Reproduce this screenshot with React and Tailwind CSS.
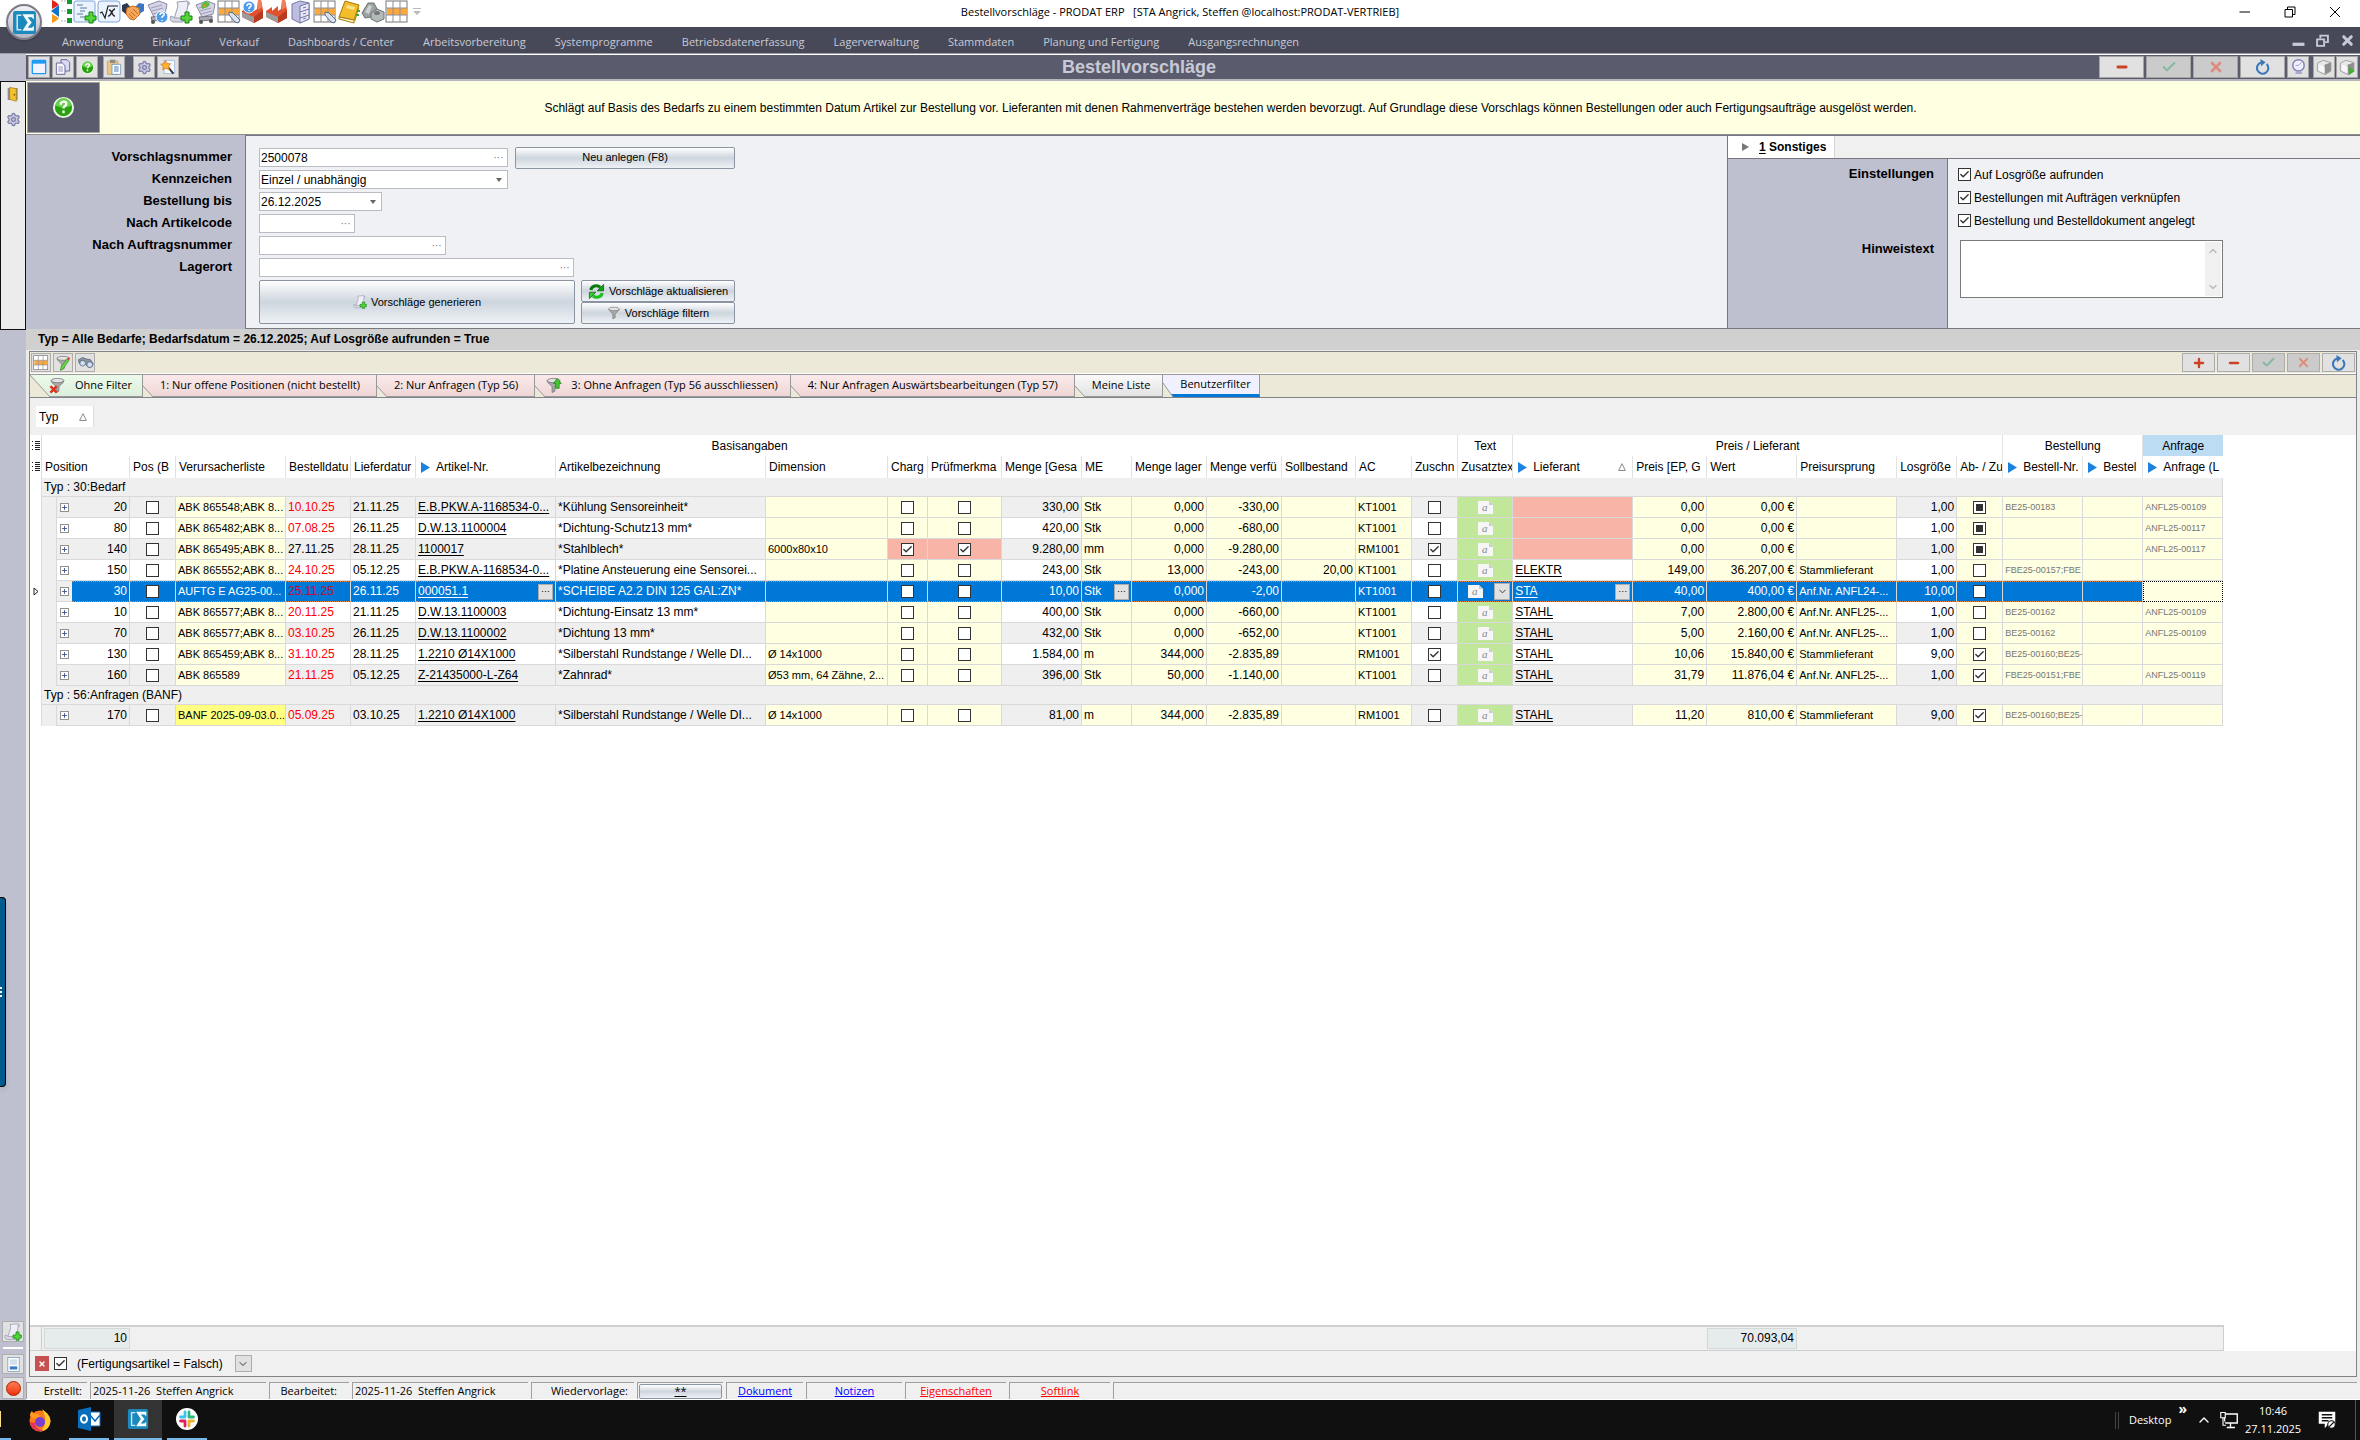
import React, { useState } from 'react';
import { Check, Minus, Plus, X, ChevronDown, ChevronUp, Settings } from 'lucide-react';

const menuItems = [
  'Anwendung', 'Einkauf', 'Verkauf', 'Dashboards / Center', 'Arbeitsvorbereitung', 'Systemprogramme',
  'Betriebsdatenerfassung', 'Lagerverwaltung', 'Stammdaten', 'Planung und Fertigung', 'Ausgangsrechnungen',
];

const Y = 'bg-[#ffffe1]';
const RED = 'bg-[#f7b4a7]';

// one entry per grid column, w is the <col> class
const columns = [
  { key: 'pos', label: 'Position', w: 'w-[58px]', num: true },
  { key: 'bv', label: 'Pos (B', w: 'w-[46px]', check: true },
  { key: 'list', label: 'Verursacherliste', w: 'w-[110px]', bg: Y, size: 'text-[11px]' },
  { key: 'order', label: 'Bestelldatu', w: 'w-[65px]' },
  { key: 'delivery', label: 'Lieferdatur', w: 'w-[65px]' },
  { key: 'article', label: 'Artikel-Nr.', w: 'w-[140px]', link: true, arrow: true },
  { key: 'name', label: 'Artikelbezeichnung', w: 'w-[210px]' },
  { key: 'dim', label: 'Dimension', w: 'w-[122px]', bg: Y, size: 'text-[11px]' },
  { key: 'charge', label: 'Charg', w: 'w-[40px]', bg: Y, check: true },
  { key: 'pruef', label: 'Prüfmerkma', w: 'w-[74px]', bg: Y, check: true },
  { key: 'qty', label: 'Menge [Gesa', w: 'w-[80px]', num: true },
  { key: 'unit', label: 'ME', w: 'w-[50px]', bg: Y },
  { key: 'stock', label: 'Menge lager', w: 'w-[75px]', bg: Y, num: true },
  { key: 'avail', label: 'Menge verfü', w: 'w-[75px]', bg: Y, num: true },
  { key: 'target', label: 'Sollbestand', w: 'w-[74px]', bg: Y, num: true },
  { key: 'ac', label: 'AC', w: 'w-[56px]', bg: Y, size: 'text-[11px]' },
  { key: 'cut', label: 'Zuschn', w: 'w-[46px]', check: true },
  { key: 'text', label: 'Zusatztex', w: 'w-[55px]', bg: 'bg-[#c1e79a]' },
  { key: 'supplier', label: 'Lieferant', w: 'w-[120px]', link: true, arrow: true, sort: true },
  { key: 'price', label: 'Preis [EP, G', w: 'w-[74px]', bg: Y, num: true },
  { key: 'value', label: 'Wert', w: 'w-[90px]', bg: Y, num: true },
  { key: 'source', label: 'Preisursprung', w: 'w-[100px]', bg: Y, size: 'text-[11px]' },
  { key: 'lot', label: 'Losgröße', w: 'w-[60px]', num: true },
  { key: 'ab', label: 'Ab- / Zu', w: 'w-[46px]', bg: Y, check: true },
  { key: 'orderNo', label: 'Bestell-Nr.', w: 'w-[80px]', bg: Y, size: 'text-[9px]', arrow: true, muted: true },
  { key: 'orderNo2', label: 'Bestel', w: 'w-[60px]', bg: Y, arrow: true },
  { key: 'request', label: 'Anfrage (L', w: 'w-[80px]', bg: Y, size: 'text-[9px]', arrow: true, muted: true },
];

const groups = [
  {
    title: 'Typ : 30:Bedarf',
    rows: [
      { pos: '20', list: 'ABK 865548;ABK 8...', order: '10.10.25', late: true, delivery: '21.11.25', article: 'E.B.PKW.A-1168534-0...', name: '*Kühlung Sensoreinheit*', qty: '330,00', unit: 'Stk', stock: '0,000', avail: '-330,00', ac: 'KT1001', price: '0,00', value: '0,00 €', lot: '1,00', ab: 'mixed', orderNo: 'BE25-00183', request: 'ANFL25-00109' },
      { pos: '80', list: 'ABK 865482;ABK 8...', order: '07.08.25', late: true, delivery: '26.11.25', article: 'D.W.13.1100004', name: '*Dichtung-Schutz13 mm*', qty: '420,00', unit: 'Stk', stock: '0,000', avail: '-680,00', ac: 'KT1001', price: '0,00', value: '0,00 €', lot: '1,00', ab: 'mixed', request: 'ANFL25-00117' },
      { pos: '140', list: 'ABK 865495;ABK 8...', order: '27.11.25', delivery: '28.11.25', article: '1100017', name: '*Stahlblech*', dim: '6000x80x10', charge: true, pruef: true, qty: '9.280,00', unit: 'mm', stock: '0,000', avail: '-9.280,00', ac: 'RM1001', cut: true, price: '0,00', value: '0,00 €', lot: '1,00', ab: 'mixed', request: 'ANFL25-00117' },
      { pos: '150', list: 'ABK 865552;ABK 8...', order: '24.10.25', late: true, delivery: '05.12.25', article: 'E.B.PKW.A-1168534-0...', name: '*Platine Ansteuerung eine Sensorei...', qty: '243,00', unit: 'Stk', stock: '13,000', avail: '-243,00', target: '20,00', ac: 'KT1001', supplier: 'ELEKTR', price: '149,00', value: '36.207,00 €', source: 'Stammlieferant', lot: '1,00', orderNo: 'FBE25-00157;FBE' },
      { pos: '30', selected: true, list: 'AUFTG E AG25-00...', order: '25.11.25', late: true, delivery: '26.11.25', article: '000051.1', name: '*SCHEIBE A2.2 DIN 125 GAL:ZN*', qty: '10,00', unit: 'Stk', stock: '0,000', avail: '-2,00', ac: 'KT1001', supplier: 'STA', price: '40,00', value: '400,00 €', source: 'Anf.Nr. ANFL24-...', lot: '10,00' },
      { pos: '10', list: 'ABK 865577;ABK 8...', order: '20.11.25', late: true, delivery: '21.11.25', article: 'D.W.13.1100003', name: '*Dichtung-Einsatz 13 mm*', qty: '400,00', unit: 'Stk', stock: '0,000', avail: '-660,00', ac: 'KT1001', supplier: 'STAHL', price: '7,00', value: '2.800,00 €', source: 'Anf.Nr. ANFL25-...', lot: '1,00', orderNo: 'BE25-00162', request: 'ANFL25-00109' },
      { pos: '70', list: 'ABK 865577;ABK 8...', order: '03.10.25', late: true, delivery: '26.11.25', article: 'D.W.13.1100002', name: '*Dichtung 13 mm*', qty: '432,00', unit: 'Stk', stock: '0,000', avail: '-652,00', ac: 'KT1001', supplier: 'STAHL', price: '5,00', value: '2.160,00 €', source: 'Anf.Nr. ANFL25-...', lot: '1,00', orderNo: 'BE25-00162', request: 'ANFL25-00109' },
      { pos: '130', list: 'ABK 865459;ABK 8...', order: '31.10.25', late: true, delivery: '28.11.25', article: '1.2210 Ø14X1000', name: '*Silberstahl Rundstange / Welle DI...', dim: 'Ø 14x1000', qty: '1.584,00', unit: 'm', stock: '344,000', avail: '-2.835,89', ac: 'RM1001', cut: true, supplier: 'STAHL', price: '10,06', value: '15.840,00 €', source: 'Stammlieferant', lot: '9,00', ab: true, orderNo: 'BE25-00160;BE25-' },
      { pos: '160', list: 'ABK 865589', order: '21.11.25', late: true, delivery: '05.12.25', article: 'Z-21435000-L-Z64', name: '*Zahnrad*', dim: 'Ø53 mm, 64 Zähne, 2...', qty: '396,00', unit: 'Stk', stock: '50,000', avail: '-1.140,00', ac: 'KT1001', supplier: 'STAHL', price: '31,79', value: '11.876,04 €', source: 'Anf.Nr. ANFL25-...', lot: '1,00', ab: true, orderNo: 'FBE25-00151;FBE', request: 'ANFL25-00119' },
    ],
  },
  {
    title: 'Typ : 56:Anfragen (BANF)',
    rows: [
      { pos: '170', list: 'BANF 2025-09-03.0...', strong: true, order: '05.09.25', late: true, delivery: '03.10.25', article: '1.2210 Ø14X1000', name: '*Silberstahl Rundstange / Welle DI...', dim: 'Ø 14x1000', qty: '81,00', unit: 'm', stock: '344,000', avail: '-2.835,89', ac: 'RM1001', supplier: 'STAHL', price: '11,20', value: '810,00 €', source: 'Stammlieferant', lot: '9,00', ab: true, orderNo: 'BE25-00160;BE25-' },
    ],
  },
];

/* ---------- icons ---------- */

const Svg = ({ size = 24, children }) => (
  <svg width={size} height={size} viewBox="0 0 24 24" className="block shrink-0" aria-hidden="true">{children}</svg>
);

const PlusBadge = () => (
  <path d="M16 12h4v4h3v4h-3v3h-4v-3h-4v-4h4z" fill="#52d63a" stroke="#14800f" />
);

const OrgIcon = () => (
  <Svg>
    <path d="M3 0a13 13 0 0 1 7 5L3 9z" fill="#e2231a" />
    <path d="M10 5v12l-8-6z" fill="#1173c8" />
    <path d="M3 14l7 4a13 13 0 0 1-7 5z" fill="#f59a1b" />
    <path d="M12 1h5M12 11h5M12 21h5" stroke="#b9b9b9" strokeDasharray="2 1" />
    <path d="M18 0h5v4h-5zM18 9h5v5h-5zM18 18h5v5h-5z" fill="#0f9b2e" />
  </Svg>
);

const DocPlusIcon = () => (
  <Svg>
    <rect x="1" y="1" width="21" height="21" rx="2" fill="#eaf3ff" stroke="#7fa5d8" />
    <path d="M4 5h6M7 8h7M7 11h5M4 14h6M7 17h4" stroke="#5d7f93" />
    <PlusBadge />
  </Svg>
);

const RootIcon = () => (
  <Svg>
    <rect x="1" y="1" width="22" height="21" rx="3" fill="#eaf3ff" stroke="#7fa5d8" />
    <path d="M3 13l2-1 3 6L11 6h10" fill="none" stroke="#222" strokeWidth="1.2" />
    <path d="M12 10c3-1 3 7 6 6M18 9c-3 0-4 8-7 7" fill="none" stroke="#222" strokeWidth="1.4" />
  </Svg>
);

const HandshakeIcon = () => (
  <Svg>
    <path d="M1 5l5-2 4 5-4 7-5-4z" fill="#2c3a4c" />
    <path d="M23 4l-5-1-4 4 4 7 5-3z" fill="#3b77c4" />
    <path d="M6 8l6-2 6 2 1 6-6 6-4-1-4-5z" fill="#f6a65b" stroke="#c76b20" />
    <path d="M8 14l4 4M10 12l4 4M12 9l5 5" stroke="#c76b20" />
  </Svg>
);

const CartIcon = ({ help }) => (
  <Svg>
    <path d="M3 5l11-4 8 3-2 10-11 3z" fill="#d5d5e6" stroke="#8a8aa8" />
    <path d="M6 8l11-3M7 11l11-3M8 14l11-3" stroke="#9c9cba" />
    {!help && <path d="M8 5l4-4 5 2-2 4-6 2z" fill="#58c040" />}
    {!help && <path d="M9 6l3-2 2 3z" fill="#f08a28" />}
    <path d="M6 17l13-1v4l-12 1z" fill="#a6a6b8" stroke="#777" />
    <circle cx="8" cy="22" r="2" fill="#555" /><circle cx="18" cy="21" r="2" fill="#555" />
    {help && <circle cx="17" cy="17" r="6" fill="#4d9be8" stroke="#fff" />}
    {help && <path d="M15 15c0-3 5-3 4 0l-2 2v1M17 20v1" fill="none" stroke="#fff" strokeWidth="1.5" />}
  </Svg>
);

const ScrollIcon = ({ size }) => (
  <Svg size={size}>
    <path d="M8 2l10-1c3 0 3 4 1 4l-3 14H5L9 6z" fill="#eeeef6" stroke="#9a9ab0" />
    <path d="M2 16c-2 3 0 6 3 6h9l1-4H6z" fill="#d7d7e4" stroke="#9a9ab0" />
    <path d="M18 1c3 0 4 5 0 5z" fill="#b4b4cc" />
    <PlusBadge />
  </Svg>
);

const GridIcon = ({ pen, size }) => (
  <Svg size={size}>
    <rect x="1" y="1" width="21" height="21" fill="#fff" stroke="#777" />
    <path d="M2 8h20v7H2z" fill="#fba93a" />
    <path d="M8 1v21M15 1v21M1 8h21M1 15h21" stroke="#8e8e9a" />
    {pen && <path d="M12 12l4 1 7 7-2 3-3-1-6-7z" fill="#d9e3f2" stroke="#5a6b8a" />}
  </Svg>
);

const FactoryIcon = ({ help }) => (
  <Svg>
    <path d="M17 0h3l2 10v8l-9 5-12-6V11l6-4v4l6-5v5l3-2z" fill="#e0522f" />
    <path d="M1 12l12 5v6L1 17z" fill="#9b9b9b" />
    <path d="M17 0h3l1 7-4 3z" fill="#f27e5c" />
    <path d="M13 17l9-7v8l-9 5z" fill="#b93a1e" />
    {help && <circle cx="8" cy="7" r="6" fill="#4d9be8" stroke="#e9f3ff" />}
    {help && <path d="M6 6c0-3 5-3 4 0L8 8v1M8 10v1" fill="none" stroke="#fff" strokeWidth="1.5" />}
  </Svg>
);

const CabinetIcon = () => (
  <Svg>
    <path d="M3 4l8-3 9 2v16l-9 4-8-4z" fill="#bdbde0" stroke="#7777a8" />
    <path d="M11 6l9-3v16l-9 4z" fill="#e8e8f8" stroke="#7777a8" />
    <path d="M11 12l9-3M11 18l9-3M14 8l3-1M14 14l3-1M14 19l3-1" stroke="#7777a8" />
  </Svg>
);

const BookIcon = () => (
  <Svg>
    <path d="M8 1l14 4-5 15L2 17z" fill="#f2bd2a" stroke="#a87a08" />
    <path d="M2 17l15 3v3L2 19z" fill="#fff6cf" stroke="#a87a08" />
    <path d="M22 5v4l-4 13-1-2z" fill="#c68e10" />
    <path d="M10 5l8 2-1 3-8-2z" fill="#fbe28e" />
    <path d="M20 11h3M19 15h3" stroke="#4aa43a" strokeWidth="2" />
  </Svg>
);

const PartsIcon = () => (
  <Svg>
    <path d="M1 13L7 3l6 0 3 6-6 8-6 1z" fill="#9da3a3" stroke="#6d7373" />
    <path d="M4 12l4-7 3 1-3 8z" fill="#cdd2d2" />
    <path d="M10 13l6-4 7 3v7l-7 3-6-3z" fill="#b4baba" stroke="#6d7373" />
    <ellipse cx="16" cy="13" rx="3" ry="2" fill="#737979" />
  </Svg>
);

const HelpIcon = ({ size }) => (
  <Svg size={size}>
    <circle cx="12" cy="12" r="10" fill="#28a00c" stroke="#e9f5e6" strokeWidth="2" />
    <path d="M4 10a8 8 0 0 1 16 0c-5 3-11 3-16 0z" fill="#69cf4c" />
    <path d="M9 9c0-4 6-4 6-1 0 3-3 2-3 5M12 15v3" fill="none" stroke="#fff" strokeWidth="2.4" />
  </Svg>
);

const WindowIcon = () => (
  <Svg size={16}>
    <rect x="2" y="2" width="20" height="20" rx="1" fill="#f3f3ff" stroke="#1e9bf5" strokeWidth="2" />
    <path d="M2 2h20v5H2z" fill="#1e9bf5" />
  </Svg>
);

const CopyIcon = () => (
  <Svg size={16}>
    <path d="M9 1h9l4 4v13H9z" fill="#dadaf2" stroke="#6a6a9c" strokeWidth="1.5" />
    <path d="M2 6h9l4 4v13H2z" fill="#f6f6ff" stroke="#6a6a9c" strokeWidth="1.5" />
    <path d="M5 12h7M5 15h7M5 18h7" stroke="#6a6a9c" />
  </Svg>
);

const PasteIcon = () => (
  <Svg size={16}>
    <path d="M2 3h16v20H2z" fill="#e9c684" stroke="#c29a50" />
    <path d="M6 1h8v5H6z" fill="#8c8c8c" />
    <path d="M9 8h13v15H9z" fill="#fff" stroke="#4b7fb5" />
    <path d="M12 12h7M12 15h7M12 18h7" stroke="#4b7fb5" strokeWidth="1.5" />
  </Svg>
);

const GearIcon = () => <Settings size={15} color="#7d7da6" fill="#c9c9e4" strokeWidth={2} />;

const WandIcon = () => (
  <Svg size={16}>
    <path d="M6 2h16v20H6z" fill="#f4f8ff" stroke="#8aa7d0" />
    <path d="M12 12l8 10" stroke="#333" strokeWidth="3" />
    <path d="M8 2l3 5 5 0-3 4 1 5-5-2-5 2 1-5-4-3 5-1z" fill="#fbb52c" stroke="#d2661a" />
  </Svg>
);

const FunnelIcon = ({ kind, size = 18 }) => (
  <Svg size={size}>
    <path d="M3 5c0 4 6 6 7 9v8l4-2v-6c1-3 7-5 7-9z" fill="#a8a8a8" stroke="#6f6f6f" />
    <ellipse cx="12" cy="5" rx="9" ry="3" fill="#e2e2e2" stroke="#6f6f6f" />
    {kind === 'off' && <path d="M2 13l9 9M11 13l-9 9" stroke="#e0301e" strokeWidth="3.5" />}
    {kind === 'up' && <path d="M17 2l6 7h-3v7h-5V9h-3z" fill="#46c62e" stroke="#14800f" />}
    {kind === 'edit' && <path d="M21 8l-9 13-4 2 1-5 9-12z" fill="#6fd44c" stroke="#2e8b1a" />}
    {kind === 'edit' && <path d="M18 6l2-3 3 2-2 3z" fill="#e5423a" />}
  </Svg>
);

const BinocularsIcon = () => (
  <Svg size={17}>
    <path d="M2 8l6-3 5 2 6 1 4 6-2 4-5 1-4-5-5 1-4-2z" fill="#8a93a3" stroke="#515b6c" />
    <circle cx="8" cy="13" r="4" fill="#cfe0f7" stroke="#515b6c" />
    <circle cx="18" cy="15" r="4" fill="#cfe0f7" stroke="#515b6c" />
  </Svg>
);

const PrinterIcon = ({ go }) => (
  <Svg size={17}>
    <path d="M2 6l8-4 11 3v12l-8 5-11-5z" fill="#e9e9e9" stroke="#8a8a8a" />
    <path d="M12 8l9-3v12l-9 5z" fill="#8e8e8e" />
    <path d="M4 8l8 3v9l-8-4z" fill="#f7f7f7" />
    {go && <path d="M14 11l8 6-8 6z" fill="#3cb524" />}
  </Svg>
);

const PreviewIcon = () => (
  <Svg size={17}>
    <circle cx="12" cy="9" r="8" fill="#eeeeff" stroke="#8080b8" strokeWidth="2" />
    <path d="M12 9l4-4M8 9h4" stroke="#8080b8" />
    <path d="M9 18h8v3H7z" fill="#a9a9d4" />
  </Svg>
);

const DoorIcon = () => (
  <Svg size={16}>
    <path d="M4 3h15v18H4z" fill="#8d8d8d" />
    <path d="M7 2l10 2v19l-10-3z" fill="#f5c030" stroke="#a57a0a" />
    <circle cx="14" cy="13" r="1.3" fill="#7c5a00" />
  </Svg>
);

const RefreshGreen = () => (
  <Svg size={17}>
    <path d="M4 10c1-6 9-8 13-4" fill="none" stroke="#0b7a0b" strokeWidth="4.500" />
    <path d="M22 2v9h-9z" fill="#14a514" stroke="#0a4f0a" />
    <path d="M20 14c-1 6-9 8-13 4" fill="none" stroke="#1fbf1f" strokeWidth="4.500" />
    <path d="M2 22v-9h9z" fill="#35cf35" stroke="#0a4f0a" />
  </Svg>
);

const ReloadIcon = () => (
  <Svg size={16}>
    <path d="M17.500 7.500a8.500 8.500 0 1 1-8-2.200" fill="none" stroke="#3c78b8" strokeWidth="3.200" />
    <path d="M8 0l8 5-7 6z" fill="#3c78b8" />
  </Svg>
);

const NetworkIcon = () => (
  <Svg size={18}>
    <path d="M6 4h17v12H6zM14 16v5M9 22h11" fill="none" stroke="#fff" strokeWidth="1.800" />
    <path d="M1 2h6v7H1zM4 9v10h4" fill="#101010" stroke="#fff" strokeWidth="1.500" />
  </Svg>
);

const ProdatMark = ({ size = 24 }) => (
  <Svg size={size}>
    <rect x="1" y="1" width="22" height="22" rx="2" fill="#1c89bd" />
    <path d="M9 5H5v14h4" fill="none" stroke="#cfe6f2" strokeWidth="1.500" />
    <path d="M10 4h11v5l-2-2h-4l4 5-4 5h4l2-2v5H10l5-8z" fill="#f4fafd" />
  </Svg>
);

const BlueArrow = () => (
  <svg width="9" height="11" viewBox="0 0 9 11" className="mr-[6px] ml-[2px] shrink-0" aria-hidden="true">
    <path d="M0 0l9 5.500-9 5.500z" fill="#1b82e0" />
  </svg>
);

const SortTriangle = () => (
  <svg width="8" height="8" viewBox="0 0 8 8" className="shrink-0" aria-hidden="true">
    <path d="M4 .7L7.400 7.500H.6z" fill="none" stroke="#8c8c8c" />
  </svg>
);

const Gutter = () => (
  <svg width="8" height="10" viewBox="0 0 8 10" className="mx-auto block" aria-hidden="true">
    <path d="M3 .5h5M3 2.500h5M3 4.500h5M3 6.500h5M3 8.500h5" stroke="#222" />
    <path d="M0 .5h1M0 4.500h1M0 8.500h1" stroke="#222" />
  </svg>
);

/* ---------- controls ---------- */

const CheckBox = ({ state, label, id }) => {
  const [on, setOn] = useState(state === true);
  return (
    <span className="relative inline-block h-[13px] w-[13px] shrink-0 align-middle">
      <input
        id={id}
        type="checkbox"
        aria-label={label}
        checked={on}
        onChange={() => setOn(!on)}
        className="absolute inset-0 m-0 h-[13px] w-[13px] appearance-none border border-[#333] bg-white"
      />
      {on && <Check size={11} strokeWidth={3} color="#333" className="pointer-events-none absolute top-px left-px" />}
      {state === 'mixed' && !on && <span className="pointer-events-none absolute top-[3px] left-[3px] h-[7px] w-[7px] bg-[#333]" />}
    </span>
  );
};

const ToolButton = ({ label, wide, disabled, children }) => (
  <button
    type="button"
    aria-label={label}
    disabled={disabled}
    className={`flex h-[22px] items-center justify-center border border-[#a5a5a5] ${wide ? 'w-[45px]' : 'w-[22px]'} ${disabled ? 'bg-[#cbcbcb]' : 'bg-[#e1e1e1]'}`}
  >
    {children}
  </button>
);

const GridButton = ({ label, disabled, wide, children }) => (
  <button
    type="button"
    aria-label={label}
    disabled={disabled}
    className={`flex h-[19px] items-center justify-center border border-[#adadad] ${wide ? 'w-[33px]' : 'w-[20px]'} ${disabled ? 'bg-[#cbcbcb]' : 'bg-[#e1e1e1]'}`}
  >
    {children}
  </button>
);

const PushButton = ({ className, children }) => (
  <button
    type="button"
    className={`flex items-center justify-center gap-1 rounded-[2px] border border-[#8b95a1] bg-linear-to-b from-white via-[#cdd5dd] to-[#eef2f6] text-[11px] ${className}`}
  >
    {children}
  </button>
);

const Field = ({ id, value = '', width, arrow }) => (
  <div className={`flex h-[19px] items-center border border-[#b9bcc2] bg-white ${width}`}>
    <input id={id} defaultValue={value} className="h-full min-w-0 flex-1 px-px text-[12px] outline-none" />
    <button type="button" aria-label="Auswahl" className="flex h-full w-[17px] shrink-0 items-center justify-center text-[10px] leading-none text-gray-500">
      {arrow ? <svg width="6" height="4" viewBox="0 0 6 4"><path d="M0 0h6L3 4z" fill="#666" /></svg> : '···'}
    </button>
  </div>
);

const FormLabel = ({ htmlFor, children }) => (
  <label htmlFor={htmlFor} className="block h-[19px] text-[13px] leading-[19px] font-bold">{children}</label>
);

const Tab = ({ first, active, tone, icon, pad = 'pr-[16px]', children }) => (
  <button
    type="button"
    role="tab"
    aria-selected={!!active}
    className={`relative flex h-[22px] items-center border-r border-[#999] font-["Open_Sans",sans-serif] text-[11px] ${first ? 'pl-[45px]' : icon ? 'pl-[36px]' : 'pl-[17px]'} ${active ? 'border-b-[3px] border-b-[#0078d7]' : 'border-b'} ${pad} ${tone}`}
  >
    <svg width="20" height="22" viewBox="0 0 20 22" className="absolute top-0 left-0" aria-hidden="true">
      <path d={first ? 'M0 0L20 22H0z' : active ? 'M0 8L10 22H0z' : 'M0 11L10 22H0z'} fill="#ece9d8" />
      <path d={first ? 'M0 0L20 22' : active ? 'M0 8L10 22' : 'M0 11L10 22'} stroke="#999" fill="none" />
    </svg>
    {icon && <span className={`absolute top-[2px] ${first ? 'left-[19px]' : 'left-[10px]'}`}><FunnelIcon kind={icon} size={17} /></span>}
    {children}
  </button>
);

const pink = 'bg-linear-to-b from-[#fbeaea] to-[#efd6d6]';

const Cell = ({ col, row, zebra }) => {
  const value = row[col.key];
  const sel = row.selected;
  let bg = col.bg || zebra;
  if (col.key === 'supplier' && !value) bg = RED;
  if ((col.key === 'charge' || col.key === 'pruef') && value) bg = RED;
  if (col.key === 'list' && row.strong) bg = 'bg-[#ffff80]';
  if (sel) bg = col.key === 'request' ? 'bg-[#ffffe1]' : 'bg-[#0078d7]';

  let color = sel ? 'text-white' : 'text-black';
  if (col.muted) color = 'text-[#777]';
  if (col.key === 'order' && row.late) color = sel ? 'text-[#c01030]' : 'text-[#ff0000]';

  let content = value;
  if (col.check) content = <CheckBox state={value} label={`${col.label} ${row.pos}`} />;
  if (col.key === 'text') {
    content = (
      <span className={`flex h-[19px] items-center ${sel ? 'justify-between pl-[8px]' : 'justify-center'}`}>
        <svg width="15" height="13" viewBox="0 0 15 13" aria-hidden="true">
          <path d="M0 0h11l4 4v9H0z" fill="#f6f6f6" />
          <path d="M11 0v4h4z" fill="#ccc" />
          <text x="4" y="10" fontSize="11" fontStyle="italic" fontFamily="Liberation Serif" fill="#888">a</text>
        </svg>
        {sel && (
          <button type="button" aria-label="Zusatztext öffnen" className="flex h-[17px] w-[16px] items-center justify-center border border-[#adadad] bg-[#e1e1e1]">
            <ChevronDown size={11} color="#333" />
          </button>
        )}
      </span>
    );
  }
  if (col.link && value) content = <a href="#" className="underline underline-offset-2">{value}</a>;
  if (sel && ['article', 'unit', 'supplier'].includes(col.key)) {
    content = (
      <span className="flex items-center justify-between">
        {content}
        <button type="button" aria-label="Auswahl" className="flex h-[16px] w-[15px] items-center justify-center border border-[#adadad] bg-[#e1e1e1] text-[9px] leading-none text-black">···</button>
      </span>
    );
  }
  const edge = sel
    ? col.key === 'request' ? 'border border-dotted border-black' : 'border-r border-r-[#d9d9d9] border-y border-y-[#e8833a] [border-top-style:dotted] [border-bottom-style:dotted]'
    : 'border-r border-b border-[#d9d9d9]';
  const pad = col.check ? 'text-center' : col.num ? 'pr-[2px] text-right' : col.size ? 'pl-[2px]' : 'px-[2px]';
  return (
    <td className={`h-[21px] overflow-hidden p-0 leading-[19px] whitespace-nowrap ${edge} ${bg} ${color} ${col.size || ''} ${pad}`}>
      {content}
    </td>
  );
};

const Cols = () => (
  <colgroup>
    <col className="w-[12px]" />
    <col className="w-[15px]" />
    <col className="w-[15px]" />
    {columns.map((c) => <col key={c.key} className={c.w} />)}
  </colgroup>
);

const DataGrid = () => (
  <table className="w-[2193px] table-fixed border-separate border-spacing-0 text-[12px]">
    <Cols />
    <thead>
      <tr className="h-[21px]">
        <th className="border-r border-[#ddd] p-0"><Gutter /></th>
        <th colSpan={19} className="border-r border-[#e2e2e2] p-0 font-normal">Basisangaben</th>
        <th className="border-r border-[#e2e2e2] p-0 font-normal">Text</th>
        <th colSpan={6} className="border-r border-[#e2e2e2] p-0 font-normal">Preis / Lieferant</th>
        <th colSpan={2} className="border-r border-[#e2e2e2] p-0 font-normal">Bestellung</th>
        <th className="bg-[#bcdcf4] p-0 font-normal">Anfrage</th>
      </tr>
      <tr className="h-[22px]">
        <th className="border-r border-[#ddd] p-0"><Gutter /></th>
        {columns.map((c, i) => (
          <th
            key={c.key}
            colSpan={i === 0 ? 3 : 1}
            className={`overflow-hidden py-0 pr-0 pl-[3px] text-left font-normal whitespace-nowrap ${c.key === 'request' ? '' : 'border-r border-[#e2e2e2]'}`}
          >
            <span className="flex items-center">
              {c.arrow && <BlueArrow />}
              <span className={c.sort ? 'flex-1' : ''}>{c.label}</span>
              {c.sort && <span className="mr-[6px]"><SortTriangle /></span>}
            </span>
          </th>
        ))}
      </tr>
    </thead>
    {groups.map((g) => (
      <tbody key={g.title}>
        <tr className="h-[19px]">
          <td className="border-r border-[#ddd] p-0" />
          <td colSpan={29} className="border-r border-b border-[#d9d9d9] bg-[#efefef] p-0 pl-[2px] leading-[18px]">{g.title}</td>
        </tr>
        {g.rows.map((row, i) => {
          const zebra = i % 2 === 0 ? 'bg-[#efefef]' : 'bg-white';
          return (
            <tr key={row.pos}>
              <td className="border-r border-[#ddd] p-0">
                {row.selected && <svg width="6" height="9" viewBox="0 0 6 9" className="ml-[3px]"><path d="M1 1l4 3.500-4 3.500z" fill="none" stroke="#222" /></svg>}
              </td>
              <td className="border-r border-[#d9d9d9] bg-[#efefef] p-0" />
              <td className={`border-b border-[#d9d9d9] p-0 ${zebra}`}>
                <button type="button" aria-label="Zeile aufklappen" className="ml-[3px] flex h-[9px] w-[9px] items-center justify-center border border-[#919191] bg-white">
                  <Plus size={7} strokeWidth={3} color="#3a4d8a" />
                </button>
              </td>
              {columns.map((c) => <Cell key={c.key} col={c} row={row} zebra={zebra} />)}
            </tr>
          );
        })}
      </tbody>
    ))}
  </table>
);

const StatusCell = ({ className, children }) => (
  <div className={`mr-[3px] flex h-[17px] items-center border-t border-l border-[#a0a0a0] ${className}`}>{children}</div>
);

const quickIcons = [
  ['Organigramm', <OrgIcon />], ['Beleg anlegen', <DocPlusIcon />], ['Formel', <RootIcon />], ['Partner', <HandshakeIcon />],
  ['Bedarf', <CartIcon help />], ['Bestellung', <ScrollIcon />], ['Einkauf', <CartIcon />], ['Tabelle bearbeiten', <GridIcon pen />],
  ['Fertigung prüfen', <FactoryIcon help />], ['Fertigung', <FactoryIcon />], ['Archiv', <CabinetIcon />], ['Liste bearbeiten', <GridIcon pen />],
  ['Adressen', <BookIcon />], ['Artikel', <PartsIcon />], ['Tabelle', <GridIcon />],
];

export default function App() {
  return (
    <div className="relative flex h-screen flex-col overflow-hidden bg-[#bebfcf] font-['Liberation_Sans',Arial,sans-serif] text-[12px] text-black">
      {/* title bar */}
      <header className="flex h-[27px] shrink-0 items-start bg-white font-['Open_Sans',sans-serif]">
        <div className="flex-1">
          <div className="flex items-center pl-[49px]">
            {quickIcons.map(([name, icon]) => (
              <button key={name} type="button" aria-label={name} className="h-[24px] w-[24px]">{icon}</button>
            ))}
            <svg width="8" height="8" viewBox="0 0 8 8" className="ml-[4px]" aria-hidden="true"><path d="M0 .5h8" stroke="#bbb" /><path d="M0 3h8L4 7z" fill="#bbb" /></svg>
          </div>
        </div>
        <h1 className="pt-[4px] text-[11px] leading-[16px] whitespace-pre">{'Bestellvorschläge - PRODAT ERP   [STA Angrick, Steffen @localhost:PRODAT-VERTRIEB]'}</h1>
        <div className="flex-1">
          <div className="flex justify-end gap-[33px] pt-[6px] pr-[19px]">
            <button type="button" aria-label="Minimieren"><Svg size={12}><path d="M1 12h21" stroke="#000" strokeWidth="2" /></Svg></button>
            <button type="button" aria-label="Wiederherstellen"><Svg size={12}><path d="M2 7h15v15H2zM7 7V2h15v15h-5" fill="none" stroke="#000" strokeWidth="2" /></Svg></button>
            <button type="button" aria-label="Schließen"><Svg size={12}><path d="M2 2l20 20M22 2L2 22" stroke="#000" strokeWidth="2" /></Svg></button>
          </div>
        </div>
      </header>

      <nav className="flex h-[27px] shrink-0 items-center border-b border-[#9b9ba3] bg-[#474958] pl-[62px] font-['Open_Sans',sans-serif] text-[11px] text-[#c8c9d6]">
        <div className="flex flex-1 gap-[29px] pt-[4px]">
          {menuItems.map((m) => <button key={m} type="button">{m}</button>)}
        </div>
        <div className="flex items-center gap-[11px] pr-[5px]">
          <button type="button" aria-label="Fenster minimieren"><Svg size={13}><path d="M1 16h22v6H1z" fill="#c8c9d6" /></Svg></button>
          <button type="button" aria-label="Fenster wiederherstellen"><Svg size={13}><path d="M2 10h13v12H2zM8 8V3h14v12h-5" fill="none" stroke="#c8c9d6" strokeWidth="3.500" /></Svg></button>
          <button type="button" aria-label="Fenster schließen"><X size={15} strokeWidth={5} color="#c8c9d6" /></button>
        </div>
      </nav>

      <button type="button" aria-label="Hauptmenü" className="absolute top-[4px] left-[6px] flex h-[36px] w-[36px] items-center justify-center rounded-full border-2 border-[#7b7c88] bg-linear-to-b from-[#f2f2f6] to-[#b4b5c4] shadow">
        <ProdatMark size={25} />
      </button>

      <div className="flex min-h-0 flex-1">
        {/* left strip */}
        <aside className="relative flex w-[26px] shrink-0 flex-col">
          <div className="mt-[27px] flex h-[249px] flex-col items-center gap-[10px] border border-[#111] bg-[#ececec] pt-[4px]">
            <button type="button" aria-label="Beenden"><DoorIcon /></button>
            <button type="button" aria-label="Einstellungen"><GearIcon /></button>
          </div>
          <button type="button" aria-label="Seitenleiste" className="absolute top-[843px] left-0 flex h-[190px] w-[6px] items-center rounded-r border border-l-0 border-black bg-[#005a8e] shadow-md">
            <svg width="2" height="10" viewBox="0 0 2 10"><path d="M0 1h2M0 5h2M0 9h2" stroke="#fff" strokeWidth="2" /></svg>
          </button>
          <div className="mt-auto flex flex-col items-center pb-px">
            <button type="button" aria-label="Neu" className="flex h-[21px] w-[22px] items-center justify-center border border-[#adadad] bg-[#e1e1e1]"><ScrollIcon size={18} /></button>
            <span className="my-[5px] h-[2px] w-[20px] bg-white" />
            <button type="button" aria-label="Protokoll" className="mb-[3px] flex h-[20px] w-[22px] items-center justify-center border border-[#adadad] bg-[#e1e1e1]">
              <Svg size={15}><rect x="3" y="1" width="18" height="22" fill="#fff" stroke="#5f86b4" /><path d="M6 5h12M6 8h12M6 11h12" stroke="#7fa3cc" /><path d="M6 15h12v5H6z" fill="#3c7ec4" /></Svg>
            </button>
            <button type="button" aria-label="Stopp" className="flex h-[22px] w-[22px] items-center justify-center border border-[#adadad] bg-[#e1e1e1]">
              <span className="h-[15px] w-[15px] rounded-full border border-[#a82000] bg-linear-to-b from-[#ff7a50] to-[#f02a00]" />
            </button>
          </div>
        </aside>

        <main className="flex min-w-0 flex-1 flex-col">
          {/* module toolbar */}
          <div className="flex h-[27px] shrink-0 items-center border-t border-b-2 border-t-white border-b-[#b5b5bd] bg-[#5a5c6d] px-[2px]">
            <div className="flex gap-[2px]">
              <ToolButton label="Fenster"><WindowIcon /></ToolButton>
              <ToolButton label="Kopieren"><CopyIcon /></ToolButton>
              <ToolButton label="Hilfe"><HelpIcon size={15} /></ToolButton>
            </div>
            <div className="ml-[5px]"><ToolButton label="Einfügen"><PasteIcon /></ToolButton></div>
            <div className="ml-[8px] flex gap-[2px]">
              <ToolButton label="Optionen"><GearIcon /></ToolButton>
              <ToolButton label="Assistent"><WandIcon /></ToolButton>
            </div>
            <h2 className="flex-1 text-center text-[18px] leading-[24px] font-bold text-[#c8c9d6]">Bestellvorschläge</h2>
            <div className="flex gap-[2px]">
              <ToolButton wide label="Löschen"><Minus size={14} strokeWidth={5} color="#cc4125" /></ToolButton>
              <ToolButton wide disabled label="Speichern"><Check size={16} strokeWidth={3} color="#84b8a0" /></ToolButton>
              <ToolButton wide disabled label="Verwerfen"><X size={16} strokeWidth={4} color="#dd8c7d" /></ToolButton>
              <ToolButton wide label="Aktualisieren"><ReloadIcon /></ToolButton>
              <ToolButton label="Vorschau"><PreviewIcon /></ToolButton>
            </div>
            <div className="ml-[4px] flex gap-px">
              <ToolButton label="Drucken"><PrinterIcon /></ToolButton>
              <ToolButton label="Schnelldruck"><PrinterIcon go /></ToolButton>
            </div>
          </div>

          <div className="flex h-[54px] shrink-0 border-b border-[#8e8e92] bg-[#ffffe1]">
            <div className="m-px flex w-[73px] items-center justify-center border border-[#9fa0aa] bg-[#5a5c6d]">
              <button type="button" aria-label="Hilfe anzeigen"><HelpIcon size={23} /></button>
            </div>
            <p className="flex-1 self-center text-center text-[12px]">
              Schlägt auf Basis des Bedarfs zu einem bestimmten Datum Artikel zur Bestellung vor. Lieferanten mit denen Rahmenverträge bestehen werden bevorzugt. Auf Grundlage diese Vorschlags können Bestellungen oder auch Fertigungsaufträge ausgelöst werden.
            </p>
          </div>

          {/* form */}
          <form className="flex shrink-0 bg-[#f0f1f4]" onSubmit={(e) => e.preventDefault()}>
            <div className="flex w-[220px] flex-col gap-[3px] border-r border-[#77777f] bg-[#bebfcf] pt-[12px] pr-[13px] text-right">
              <FormLabel htmlFor="nr">Vorschlagsnummer</FormLabel>
              <FormLabel htmlFor="kz">Kennzeichen</FormLabel>
              <FormLabel htmlFor="bis">Bestellung bis</FormLabel>
              <FormLabel htmlFor="artikel">Nach Artikelcode</FormLabel>
              <FormLabel htmlFor="auftrag">Nach Auftragsnummer</FormLabel>
              <FormLabel htmlFor="lager">Lagerort</FormLabel>
            </div>
            <div className="flex flex-1 flex-col gap-[3px] border-t border-b border-[#77777f] pt-[12px] pb-[4px] pl-[13px]">
              <div className="flex h-[19px] items-center gap-[7px]">
                <Field id="nr" value="2500078" width="w-[249px]" />
                <PushButton className="h-[22px] w-[220px]">Neu anlegen (F8)</PushButton>
              </div>
              <div className="relative h-[19px] w-[249px] border border-[#b9bcc2] bg-white">
                <select id="kz" defaultValue="e" className="h-full w-full appearance-none px-px text-[12px] leading-[17px] outline-none">
                  <option value="e">Einzel / unabhängig</option>
                </select>
                <svg width="6" height="4" viewBox="0 0 6 4" className="pointer-events-none absolute top-[7px] right-[5px]"><path d="M0 0h6L3 4z" fill="#666" /></svg>
              </div>
              <Field id="bis" value="26.12.2025" width="w-[123px]" arrow />
              <Field id="artikel" width="w-[96px]" />
              <Field id="auftrag" width="w-[187px]" />
              <Field id="lager" width="w-[315px]" />
              <div className="flex items-stretch gap-[6px]">
                <PushButton className="w-[316px]"><ScrollIcon size={14} /> Vorschläge generieren</PushButton>
                <div className="flex flex-col">
                  <PushButton className="h-[22px] w-[154px]"><RefreshGreen /> Vorschläge aktualisieren</PushButton>
                  <PushButton className="h-[22px] w-[154px]"><FunnelIcon size={14} /> Vorschläge filtern</PushButton>
                </div>
              </div>
            </div>
            <div className="flex w-[633px] flex-col border-t border-l border-[#77777f]">
              <div className="flex h-[22px] bg-[#f0f0f0]">
                <button type="button" className="flex w-[107px] items-center border-r border-[#d5d5d5] bg-white pl-[14px] text-[12px] font-bold">
                  <svg width="7" height="8" viewBox="0 0 7 8" className="mr-[10px]"><path d="M0 0l7 4-7 4z" fill="#777" /></svg>
                  <span><span className="underline underline-offset-2">1</span> Sonstiges</span>
                </button>
              </div>
              <div className="flex flex-1 border-y border-[#77777f]">
                <div className="w-[220px] border-r border-[#77777f] bg-[#bebfcf] pt-[5px] pr-[13px] text-right text-[13px] leading-[19px] font-bold">
                  <div>Einstellungen</div>
                  <label htmlFor="hinweis" className="mt-[56px] block">Hinweistext</label>
                </div>
                <div className="flex flex-col pt-[4px] pl-[10px]">
                  {['Auf Losgröße aufrunden', 'Bestellungen mit Aufträgen verknüpfen', 'Bestellung und Bestelldokument angelegt'].map((t, i) => (
                    <label key={t} htmlFor={`opt${i}`} className="flex h-[23px] items-center gap-[3px] text-[12px]">
                      <CheckBox id={`opt${i}`} state={true} />
                      {t}
                    </label>
                  ))}
                  <div className="mt-[8px] ml-[2px] flex h-[58px] w-[263px] border border-[#7a7a7a] bg-white">
                    <textarea id="hinweis" className="min-w-0 flex-1 resize-none outline-none" />
                    <div className="m-px flex w-[16px] flex-col items-center justify-between bg-[#f0f0f0] py-[3px]">
                      <ChevronUp size={12} strokeWidth={3} color="#bbb" />
                      <ChevronDown size={12} strokeWidth={3} color="#bbb" />
                    </div>
                  </div>
                </div>
              </div>
            </div>
          </form>

          <p className="h-[21px] shrink-0 bg-[#d0d0d0] pl-[12px] text-[12px] leading-[21px] font-bold">
            Typ = Alle Bedarfe; Bedarfsdatum = 26.12.2025; Auf Losgröße aufrunden = True
          </p>

          <section className="flex min-h-0 flex-1 flex-col bg-[#ebebeb] px-[3px] pt-px pb-[5px]">
            <div className="flex min-h-0 flex-1 flex-col border border-[#808488]">
              <div className="flex h-[22px] shrink-0 items-center border-b border-white bg-[#ece9d8] pr-px pl-px">
                <div className="flex flex-1 gap-[2px]">
                  <GridButton label="Tabelle"><GridIcon size={16} /></GridButton>
                  <GridButton label="Filter bearbeiten"><FunnelIcon kind="edit" size={16} /></GridButton>
                  <GridButton label="Suchen"><BinocularsIcon /></GridButton>
                </div>
                <div className="flex gap-[2px]">
                  <GridButton wide label="Hinzufügen"><Plus size={14} strokeWidth={4} color="#cc4125" /></GridButton>
                  <GridButton wide label="Entfernen"><Minus size={14} strokeWidth={4} color="#cc4125" /></GridButton>
                  <GridButton wide disabled label="Übernehmen"><Check size={15} strokeWidth={3} color="#84b8a0" /></GridButton>
                  <GridButton wide disabled label="Abbrechen"><X size={15} strokeWidth={3} color="#dd8c7d" /></GridButton>
                  <GridButton wide label="Neu laden"><ReloadIcon /></GridButton>
                </div>
              </div>
              <div role="tablist" className="flex h-[24px] shrink-0 border-t border-b border-t-[#999] border-b-[#808488] bg-[#ece9d8]">
                <Tab first icon="off" pad="pr-[10px]" tone="bg-linear-to-b from-[#ecfaec] to-[#dcefdc]">Ohne Filter</Tab>
                <Tab tone={pink}>1: Nur offene Positionen (nicht bestellt)</Tab>
                <Tab tone={pink}>2: Nur Anfragen (Typ 56)</Tab>
                <Tab icon="up" pad="pr-[12px]" tone={pink}>3: Ohne Anfragen (Typ 56 ausschliessen)</Tab>
                <Tab tone={pink}>4: Nur Anfragen Auswärtsbearbeitungen (Typ 57)</Tab>
                <Tab pad="pr-[12px]" tone="bg-linear-to-b from-[#fafafa] to-[#e2e2e2]">Meine Liste</Tab>
                <Tab active pad="pr-[8px]" tone="bg-[#f0f0fe]">Benutzerfilter</Tab>
              </div>

              <div className="flex h-[37px] shrink-0 items-center bg-[#f0f0f0] pl-[6px]">
                <button type="button" className="flex h-[21px] w-[58px] items-center justify-between border-r border-[#ddd] bg-white pr-[6px] pl-[3px] text-[12px]">
                  Typ <SortTriangle />
                </button>
              </div>

              <div className="min-h-0 flex-1 overflow-hidden bg-white">
                <DataGrid />
              </div>

              <div className="shrink-0 overflow-hidden bg-white">
                <table className="w-[2193px] table-fixed border-separate border-spacing-0 border-t-2 border-r border-b border-[#cfcfcf] bg-[#f0f0f0] text-[12px]">
                  <Cols />
                  <tbody>
                    <tr className="h-[23px]">
                      <td className="border-r border-[#ccc] p-0" />
                      <td colSpan={3} className="p-0"><div className="ml-[2px] h-[21px] border border-[#d5d8d8] bg-[#e6ebeb] pr-[2px] text-right leading-[19px]">10</div></td>
                      <td colSpan={19} />
                      <td className="p-0"><div className="h-[21px] border border-[#d5d8d8] bg-[#e6ebeb] pr-[2px] text-right leading-[19px]">70.093,04</div></td>
                      <td colSpan={6} />
                    </tr>
                  </tbody>
                </table>
              </div>

              <div className="flex h-[25px] shrink-0 items-center bg-[#f0f0f0] pl-[5px]">
                <button type="button" aria-label="Filter entfernen" className="mr-[5px] flex h-[15px] w-[14px] items-center justify-center bg-[#c75050]"><X size={8} strokeWidth={4} color="#fff" /></button>
                <label htmlFor="filterOn" className="flex items-center gap-[10px] text-[12px]">
                  <CheckBox id="filterOn" state={true} />
                  (Fertigungsartikel = Falsch)
                </label>
                <button type="button" aria-label="Filter wählen" className="ml-[12px] flex h-[17px] w-[17px] items-center justify-center border border-[#adadad] bg-[#e1e1e1]"><ChevronDown size={12} color="#333" /></button>
              </div>
            </div>
          </section>

          <footer className="flex h-[18px] shrink-0 border-b border-white bg-[#f0f0f0] font-['Open_Sans',sans-serif] text-[11px]">
            <StatusCell className="w-[61px] justify-end pr-[5px]">Erstellt:</StatusCell>
            <StatusCell className="w-[176px] pl-[2px] whitespace-pre">{'2025-11-26  Steffen Angrick'}</StatusCell>
            <StatusCell className="w-[80px] justify-end pr-[12px]">Bearbeitet:</StatusCell>
            <StatusCell className="w-[176px] pl-[2px] whitespace-pre">{'2025-11-26  Steffen Angrick'}</StatusCell>
            <StatusCell className="w-[103px] justify-end pr-[6px]">Wiedervorlage:</StatusCell>
            <StatusCell className="w-[86px] px-px"><PushButton className="h-[15px] w-full underline">**</PushButton></StatusCell>
            <StatusCell className="w-[77px] justify-center"><a href="#" className="text-[#0000ff] underline">Dokument</a></StatusCell>
            <StatusCell className="w-[96px] justify-center"><a href="#" className="text-[#0000ff] underline">Notizen</a></StatusCell>
            <StatusCell className="w-[101px] justify-center"><a href="#" className="text-[#ff0000] underline">Eigenschaften</a></StatusCell>
            <StatusCell className="w-[101px] justify-center"><a href="#" className="text-[#ff0000] underline">Softlink</a></StatusCell>
            <StatusCell className="flex-1" />
          </footer>
        </main>
      </div>

      {/* windows taskbar */}
      <div className="flex h-[40px] shrink-0 items-stretch bg-[#101010] font-['Open_Sans',sans-serif] text-[11px] text-white">
        <button type="button" aria-label="Explorer" className="flex w-[11px] items-center border-b-2 border-[#76b9ed]"><span className="h-[16px] w-px bg-[#ffe08a]" /></button>
        <button type="button" aria-label="Firefox" className="mx-[9px] flex w-[40px] items-center justify-center">
          <Svg>
            <circle cx="12" cy="13" r="10.500" fill="#ff7a1a" />
            <path d="M14 1c4 3 8 7 8.500 12-1 8-6 10-10.500 10.500C17 20 20 12 14 1z" fill="#ffcb2e" />
            <path d="M2 8c0-3 1-4 2-5 1 2 2 3 4 3 3 0 4 2 4 3l-6 2z" fill="#ff9a1f" />
            <circle cx="12" cy="14" r="5" fill="#7a3fd0" />
            <path d="M2 14c1 8 9 11 15 8-5 1-10-2-10-7z" fill="#e8315c" />
          </Svg>
        </button>
        <button type="button" aria-label="Outlook" className="flex w-[40px] items-center justify-center border-b-2 border-[#76b9ed]">
          <Svg>
            <path d="M12 5h11v14H12z" fill="#fff" stroke="#0f6cbd" />
            <path d="M13 8l5 6 5-6" fill="none" stroke="#0f6cbd" strokeWidth="1.500" />
            <path d="M1 3l13-3v24L1 21z" fill="#0a6ebd" />
            <ellipse cx="7" cy="12" rx="3" ry="3.700" fill="none" stroke="#fff" strokeWidth="2" />
          </Svg>
        </button>
        <button type="button" aria-label="PRODAT" className="mx-[5px] flex w-[48px] items-center justify-center border-b-2 border-[#76b9ed] bg-[#333]"><ProdatMark size={22} /></button>
        <button type="button" aria-label="Slack" className="flex w-[40px] items-center justify-center border-b-2 border-[#76b9ed]">
          <Svg>
            <circle cx="12" cy="12" r="11" fill="#fff" />
            <path d="M10 5v5M5.500 10H10" stroke="#36c5f0" strokeWidth="2.800" strokeLinecap="round" />
            <path d="M14 5v5M14 10h4.500" stroke="#2eb67d" strokeWidth="2.800" strokeLinecap="round" />
            <path d="M14 14v5M14 14h4.500" stroke="#ecb22e" strokeWidth="2.800" strokeLinecap="round" />
            <path d="M10 14v5M5.500 14H10" stroke="#e01e5a" strokeWidth="2.800" strokeLinecap="round" />
          </Svg>
        </button>
        <div className="ml-auto flex items-center">
          <span className="mr-[10px] h-[17px] w-[4px] border-x border-[#444]" />
          <button type="button">Desktop</button>
          <button type="button" aria-label="Weitere" className="mb-[22px] ml-[7px] text-[14px] leading-none font-bold">»</button>
          <button type="button" aria-label="Ausgeblendete Symbole" className="ml-[9px]"><ChevronUp size={16} /></button>
          <button type="button" aria-label="Netzwerk" className="ml-[8px]"><NetworkIcon /></button>
          <button type="button" className="ml-[7px] w-[56px] text-center leading-[18px]">10:46<br />27.11.2025</button>
          <button type="button" aria-label="Benachrichtigungen" className="ml-[17px]">
            <Svg size={18}>
              <path d="M1 1h22v16h-9l-5 6v-6H1z" fill="#fff" />
              <path d="M5 5h14M5 9h14M5 13h9" stroke="#101010" strokeWidth="2" />
              <circle cx="18" cy="18" r="5" fill="#fff" stroke="#101010" strokeWidth="1.500" />
              <path d="M15 21l6-6" stroke="#101010" strokeWidth="1.500" />
            </Svg>
          </button>
          <span className="ml-[19px] mr-[4px] h-[40px] w-px bg-[#555]" />
        </div>
      </div>
    </div>
  );
}
